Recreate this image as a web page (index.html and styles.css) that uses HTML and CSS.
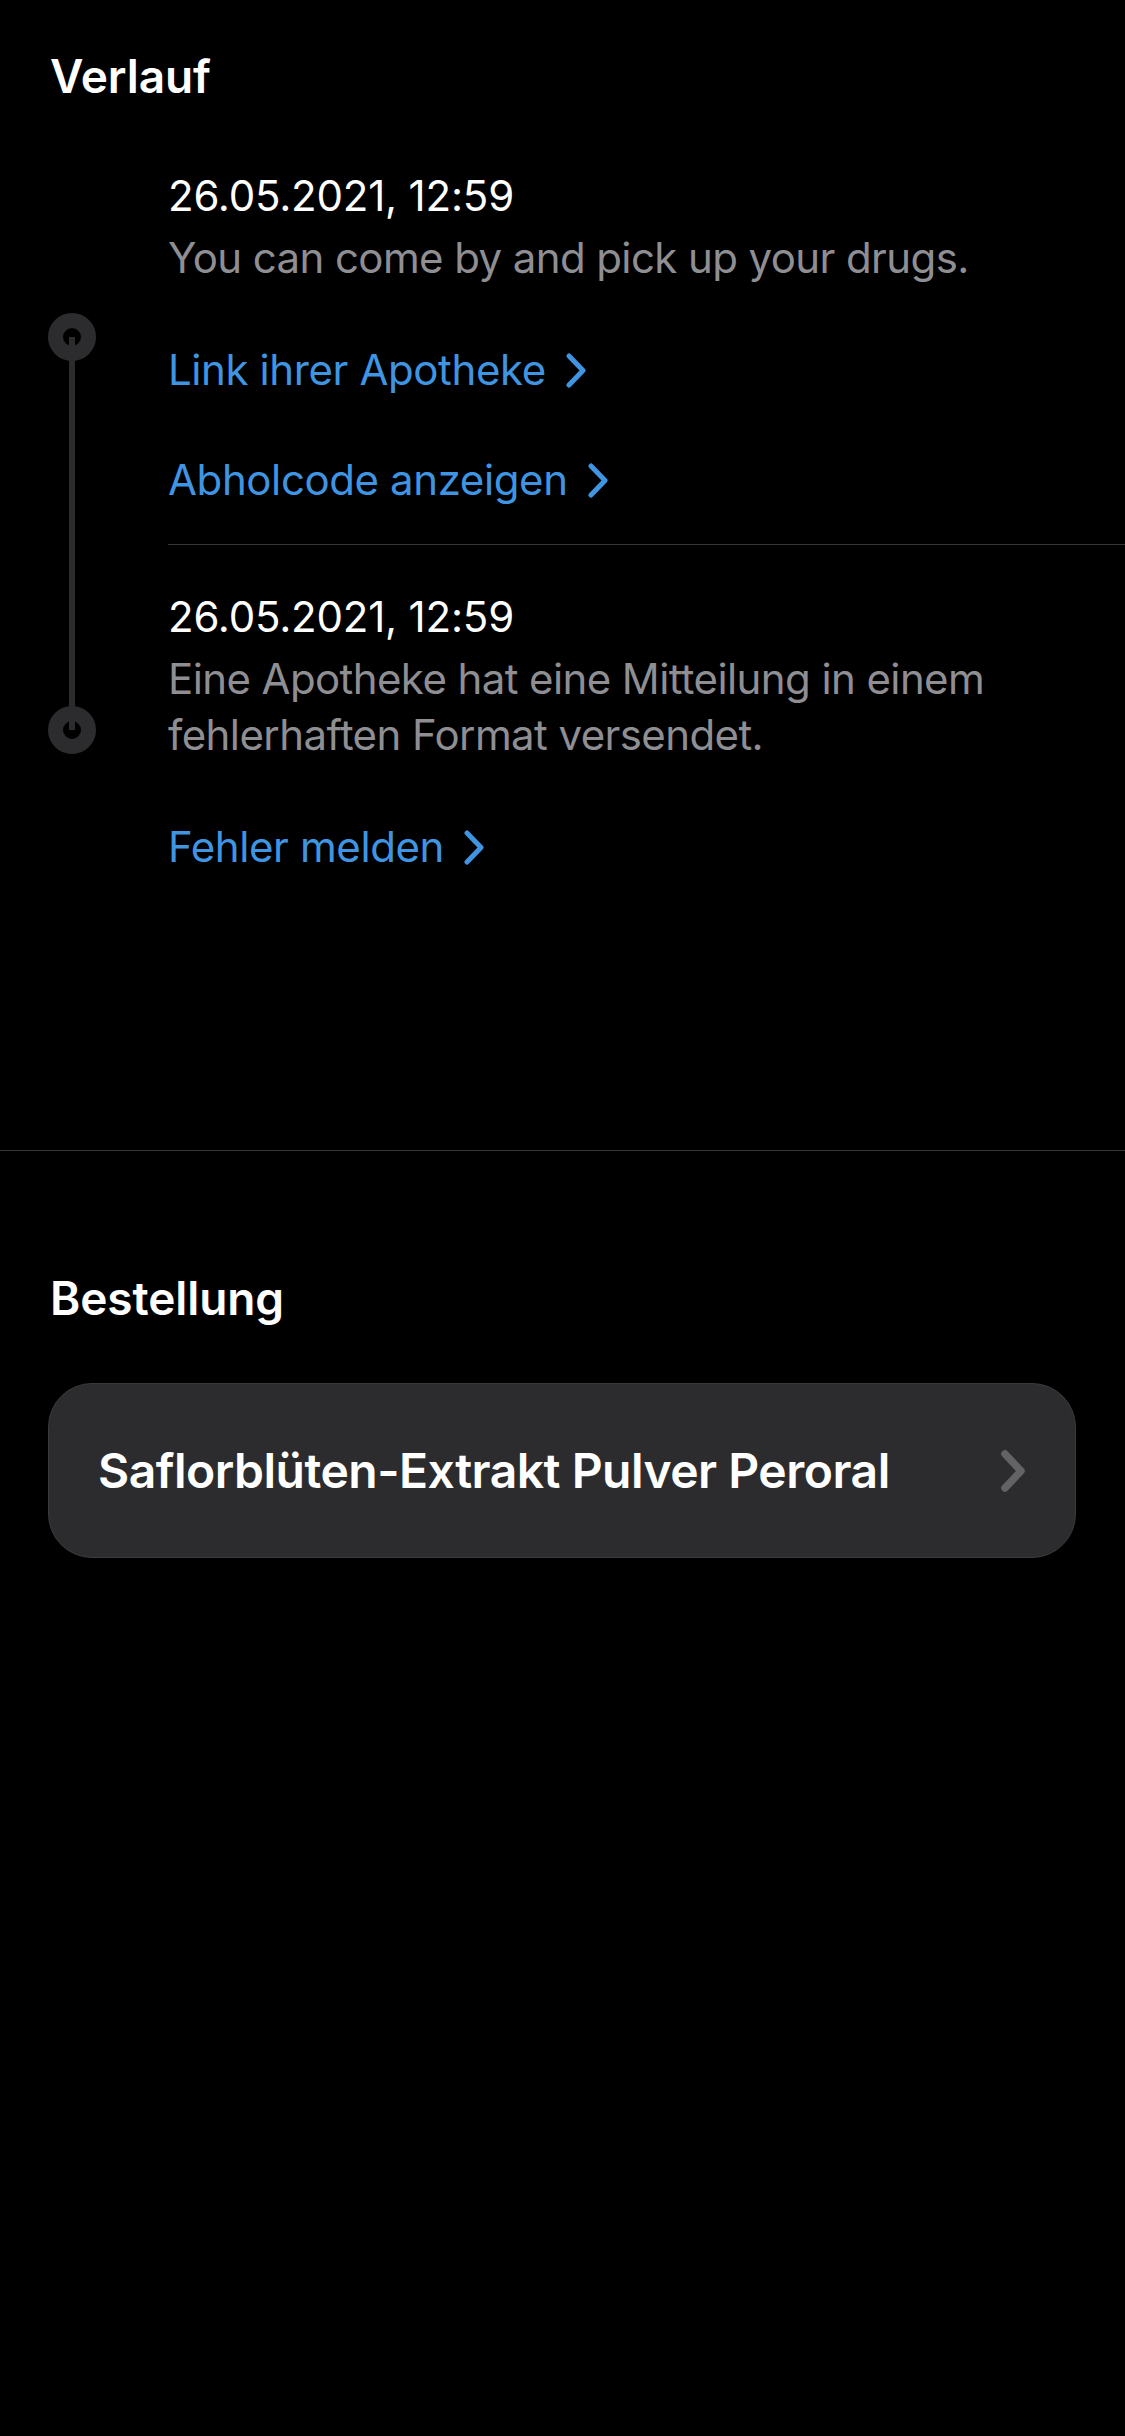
FILE: index.html
```html
<!DOCTYPE html>
<html lang="de">
<head>
<meta charset="utf-8">
<title>Verlauf</title>
<link rel="stylesheet" href="styles.css">
</head>
<body>
<main class="screen">
  <section class="history">
    <h2 class="section-title">Verlauf</h2>
    <div class="timeline">
      <div class="rail">
        <svg class="rail-svg" width="48" height="441" viewBox="0 0 48 441">
          <line x1="24" y1="24" x2="24" y2="417" stroke="#2c2c2e" stroke-width="6"/>
          <circle cx="24" cy="24" r="16.5" fill="none" stroke="#2c2c2e" stroke-width="15"/>
          <circle cx="24" cy="417" r="16.5" fill="none" stroke="#2c2c2e" stroke-width="15"/>
        </svg>
      </div>
      <div class="events">
        <div class="event">
          <p class="event-date">26.05.2021, 12:59</p>
          <p class="event-text">You can come by and pick up your drugs.</p>
          <a class="event-link">Link ihrer Apotheke<svg class="chev" width="20" height="35" viewBox="0 0 20 35"><path d="M3 3 L17 17.5 L3 32" fill="none" stroke="currentColor" stroke-width="5" stroke-linecap="round" stroke-linejoin="round"/></svg></a>
          <a class="event-link">Abholcode anzeigen<svg class="chev" width="20" height="35" viewBox="0 0 20 35"><path d="M3 3 L17 17.5 L3 32" fill="none" stroke="currentColor" stroke-width="5" stroke-linecap="round" stroke-linejoin="round"/></svg></a>
        </div>
        <div class="event event-next">
          <p class="event-date">26.05.2021, 12:59</p>
          <p class="event-text">Eine Apotheke hat eine Mitteilung in einem fehlerhaften Format versendet.</p>
          <a class="event-link">Fehler melden<svg class="chev" width="20" height="35" viewBox="0 0 20 35"><path d="M3 3 L17 17.5 L3 32" fill="none" stroke="currentColor" stroke-width="5" stroke-linecap="round" stroke-linejoin="round"/></svg></a>
        </div>
      </div>
    </div>
  </section>
  <hr class="divider">
  <section class="order">
    <h2 class="section-title">Bestellung</h2>
    <a class="order-card">
      <span class="order-name">Saflorblüten-Extrakt Pulver Peroral</span>
      <svg class="order-chev" width="24" height="42" viewBox="0 0 24 42"><path d="M4 4 L20 21 L4 38" fill="none" stroke="currentColor" stroke-width="7.5" stroke-linecap="round" stroke-linejoin="round"/></svg>
    </a>
  </section>
</main>
</body>
</html>
```
FILE: styles.css
```css
* { box-sizing: border-box; }
html, body {
  margin: 0;
  padding: 0;
  background: #000;
}
body {
  width: 1125px;
  min-height: 2436px;
  font-family: Inter, "Noto Sans", "Liberation Sans", sans-serif;
  color: #fff;
}
.screen {
  display: flex;
  flex-direction: column;
}
.history {
  padding-top: 48px;
}
.section-title {
  margin: 0 0 0 50px;
  font-size: 46px;
  line-height: 56px;
  font-weight: 600;
  letter-spacing: -0.1px;
  color: #fff;
}
.timeline {
  display: flex;
  margin-top: 64px;
  padding-bottom: 275px;
}
.rail {
  width: 168px;
  flex: 0 0 168px;
  padding-left: 48px;
  padding-top: 145px;
}
.rail-svg { display: block; }
.events {
  flex: 1;
  display: flex;
  flex-direction: column;
}
.event {
  display: flex;
  flex-direction: column;
  align-items: flex-start;
  padding-bottom: 36px;
}
.event-next {
  border-top: 1px solid #38383a;
  padding-top: 44px;
  padding-bottom: 0;
}
.event-date {
  margin: 0;
  font-size: 42px;
  line-height: 56px;
  color: #fff;
  letter-spacing: -0.2px;
}
.event-text {
  margin: 6px 0 0;
  font-size: 42px;
  line-height: 56px;
  color: #8e8e93;
  letter-spacing: -0.6px;
  max-width: 900px;
}
.event-link {
  display: inline-flex;
  align-items: center;
  gap: 20px;
  margin-top: 54px;
  font-size: 42px;
  line-height: 56px;
  color: #3f95e2;
  letter-spacing: -0.4px;
}
.event-text + .event-link { margin-top: 56px; }
.chev { display: block; }
.divider {
  margin: 0;
  border: 0;
  height: 1px;
  background: #38383a;
}
.order {
  padding-top: 119px;
}
.order-card {
  display: flex;
  align-items: center;
  justify-content: space-between;
  margin: 57px 49px 0 48px;
  height: 175px;
  padding: 0 50px 0 49px;
  background: #2c2c2e;
  border: 1.5px solid #3a3a3c;
  border-radius: 44px;
}
.order-name {
  font-size: 48px;
  font-weight: 600;
  letter-spacing: -0.5px;
  color: #fff;
}
.order-chev {
  display: block;
  color: #636366;
}
```
